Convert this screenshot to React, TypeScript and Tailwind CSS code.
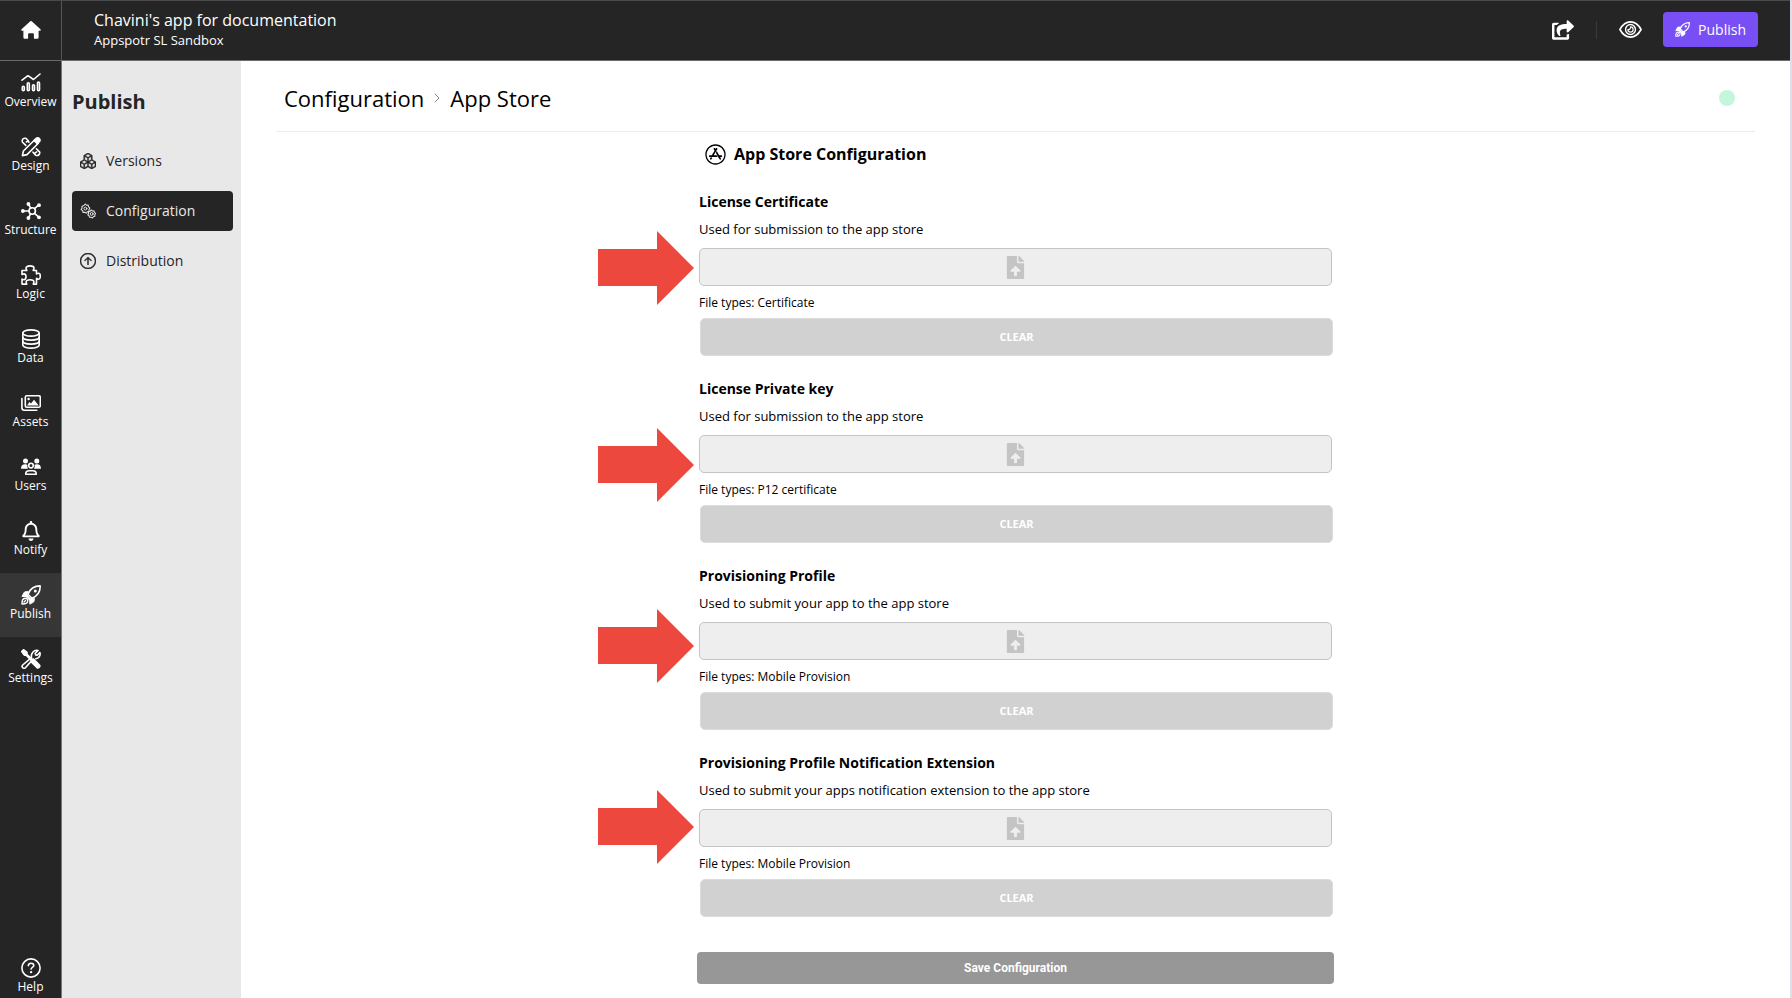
import type { ReactNode } from 'react'
import { FaAppStore, FaFileUpload, FaRegBell, FaShareSquare } from 'react-icons/fa'
import { BsBoxes, BsArrowUpCircle } from 'react-icons/bs'

function Icon({ children, className = 'size-5' }: { children: ReactNode; className?: string }) {
  return (
    <svg
      viewBox="0 0 20 20"
      className={className}
      fill="none"
      stroke="currentColor"
      strokeWidth="1.6"
      strokeLinecap="round"
      strokeLinejoin="round"
      aria-hidden="true"
    >
      {children}
    </svg>
  )
}

function HomeIcon() {
  return (
    <Icon>
      <path
        d="M9.3 1.3a1 1 0 0 1 1.4 0l8.8 8a.9.9 0 0 1-.6 1.5h-1.3v6.6a1.4 1.4 0 0 1-1.4 1.4h-2.4a.9.9 0 0 1-.9-.9v-3.6a1 1 0 0 0-1-1H8.1a1 1 0 0 0-1 1v3.6a.9.9 0 0 1-.9.9H3.8a1.400 1.400 0 0 1-1.400-1.400v-6.600H1.100a.9.9 0 0 1-.6-1.500z"
        fill="currentColor"
        stroke="none"
      />
    </Icon>
  )
}

function OverviewIcon() {
  return (
    <Icon>
      <path d="M1 7.200 7 2.700l5.500 3.800L19 1" />
      <rect x="1.300" y="13.300" width="2" height="4.400" rx="1" />
      <rect x="6.300" y="9.800" width="2" height="7.900" rx="1" />
      <rect x="11.500" y="11.800" width="2" height="5.900" rx="1" />
      <rect x="16.500" y="9.100" width="2" height="8.600" rx="1" />
    </Icon>
  )
}

function DesignIcon() {
  return (
    <Icon>
      <path d="m1.400 18.600 1-4.600L13.800 2.700l3.500 3.500L6 17.600z" />
      <path d="M13 3.500 15 1.500a2.300 2.300 0 0 1 3.300 0 2.300 2.300 0 0 1 0 3.300l-2 2z" fill="currentColor" />
      <path d="M8 5.200 6 2.400a2.600 2.600 0 0 0-4.400 2.800L4.800 8.400M7.200 3.600 5.400 5" />
      <path d="m12 15.200 2.600 2.900c2.200 1.300 4.600-.6 4.100-3l-3.300-3.300M13.500 16.300l2.200-1.400" />
    </Icon>
  )
}

function StructureIcon() {
  return (
    <Icon>
      <circle cx="11.200" cy="10" r="3.200" />
      <path d="M2.500 10H8M13.500 7.600l3.800-3.200M13.500 12.300l4 3.600M9.800 7.200 7.600 3.500M9.500 12.800l-1.700 3.600" />
      <g fill="currentColor" stroke="none">
        <circle cx="1.900" cy="10" r="1.900" />
        <circle cx="18" cy="4.200" r="1.900" />
        <circle cx="18" cy="16.300" r="1.900" />
        <circle cx="7.400" cy="3" r="1.900" />
        <circle cx="7.400" cy="17" r="1.900" />
      </g>
    </Icon>
  )
}

function LogicIcon() {
  return (
    <Icon>
      <path d="M1 5.500h4.800c0-.6-.8-1-.8-2.200C5 1.800 6.800.9 9 .9s4 .9 4 2.400c0 1.200-.8 1.600-.8 2.200h3.300V9c.6 0 1-.8 2.100-.8 1 0 1.700 1.400 1.700 3s-.7 3-1.700 3c-1.100 0-1.500-.8-2.100-.8v5.700h-3.300c0-.7.7-1 .7-2.100 0-1.400-1.700-2.300-3.900-2.300s-3.900.9-3.900 2.300c0 1.100.7 1.400.7 2.100H1v-5c.6 0 1 .6 1.900.6 1.300 0 2.100-1.300 2.100-2.900s-.8-2.900-2.100-2.900c-.9 0-1.300.6-1.900.6z" />
    </Icon>
  )
}

function DataIcon() {
  return (
    <Icon>
      <ellipse cx="10" cy="4" rx="8.200" ry="3.100" />
      <path d="M1.800 4v12c0 1.700 3.700 3.100 8.200 3.100s8.200-1.400 8.200-3.100V4" />
      <path d="M1.800 8.200c0 1.600 3.700 2.900 8.200 2.900s8.200-1.300 8.200-2.900M1.800 12.200c0 1.600 3.700 2.900 8.200 2.900s8.200-1.300 8.200-2.900" />
    </Icon>
  )
}

function AssetsIcon() {
  return (
    <Icon>
      <rect x="4.300" y="2.800" width="15" height="11.400" rx="1.500" />
      <path d="M.9 5.600v9.200a2.500 2.500 0 0 0 2.500 2.500h12.400" />
      <path d="M6 12.500 8.500 9l1.500 1.400L13 6.800l4.700 5.700z" fill="currentColor" stroke="none" />
      <circle cx="7.600" cy="6" r="1.200" fill="currentColor" stroke="none" />
    </Icon>
  )
}

function UsersIcon() {
  return (
    <Icon>
      <g fill="currentColor" stroke="none">
        <circle cx="4.500" cy="4" r="2.500" />
        <circle cx="15.800" cy="4" r="2.500" />
        <path d="M0 11.700C0 8.800 1.500 7.300 4 7.300c1.300 0 2 .3 2.500.8-.5 1.700-.1 2.700.6 3.600zM20 11.700c0-2.900-1.500-4.400-4-4.400-1.300 0-2 .3-2.500.8.5 1.700.1 2.700-.6 3.600z" />
      </g>
      <circle cx="10" cy="8.600" r="2.300" />
      <path d="M4.700 17.300c0-2.500 1.300-3.600 3.400-3.600h3.800c2.100 0 3.400 1.100 3.400 3.600z" />
    </Icon>
  )
}

function RocketIcon({ className }: { className?: string }) {
  return (
    <Icon className={className}>
      <path d="M7 9.200C9 4 12.800.9 19.100.9 19.500 7 16.300 11 10.900 13.300z" />
      <circle cx="14.300" cy="5.900" r="1.500" fill="currentColor" stroke="none" />
      <path d="M7.300 6.700H4.600c-.9 0-1.300.4-1.700 1.200L1 11.500h4.700zM13.200 12.900v2.700c0 .9-.4 1.300-1.200 1.700l-3.200 1.800v-4.700z" fill="currentColor" strokeWidth="1" />
      <path d="M5.500 9.700 10.300 14.500l-1.600.8-3.900-3.900z" fill="currentColor" strokeWidth="1" />
      <path d="M1 19c-.1-3.500.6-5.500 3-5.700 1.900 0 2.900 1.200 2.800 2.900C6.500 18.400 4.500 19.100 1 19zM3 17l1.600-1.500" strokeWidth="1.400" />
    </Icon>
  )
}

function SettingsIcon() {
  return (
    <Icon>
      <path d="M9.200 9.700 1.700 16a1.900 1.900 0 0 0 2.700 2.700l6.100-6.800M10.500 8.300c-.7-4 2.500-7.900 6.500-6.800l-2.800 2.800.4 1.600 1.600.3 2.700-2.700c1 3.300-1.300 6-4.100 6.200" />
      <path d="M.7 2.500 2.500.7 6 3.300v1.900l5 5 1.500-.1 5.900 5.900a1.800 1.800 0 0 1-2.500 2.500L10 12.600l.1-1.500-5-5H3.300z" fill="currentColor" strokeWidth="1.600" />
    </Icon>
  )
}

function HelpIcon() {
  return (
    <Icon>
      <circle cx="10" cy="10" r="9.100" />
      <path d="M7.300 7.600c.2-1.500 1.200-2.300 2.700-2.300 1.600 0 2.800.9 2.800 2.300 0 1.800-2.700 1.800-2.700 3.500" />
      <circle cx="10.100" cy="14.100" r="1.200" fill="currentColor" stroke="none" />
    </Icon>
  )
}

function EyeIcon() {
  return (
    <Icon className="size-[23px]">
      <path d="M.8 10C3 6 6.200 3.400 10 3.400S17 6 19.200 10C17 14 13.800 16.600 10 16.600S3 14 .8 10z" strokeWidth="1.400" />
      <circle cx="10" cy="10" r="4.300" strokeWidth="1.200" />
      <path d="M10 7.700a2.300 2.300 0 1 1-2.300 2.300c1.500.4 2.500-.8 2.300-2.300z" strokeWidth="1" />
    </Icon>
  )
}

function GearsIcon() {
  return (
    <Icon className="size-4">
      <path d="M6.500 1.200 8 2.800l2.200-.2.500 2.200 1.700 1.500-1.200 1.900.2 2.200-2.200.5L8 12.700l-1.900-1.100-2.300.1-.5-2.100-1.900-1.400 1.200-1.900L2.500 4l2.200-.6z" strokeWidth="1.300" />
      <circle cx="6.800" cy="7" r="1.800" strokeWidth="1.200" />
      <path d="m14.200 8.700 1.300 1.300 2-.2.500 1.900 1.500 1.300-1 1.700.1 2-1.900.5-1.200 1.500-1.700-1-2 .1-.5-1.900-1.600-1.200 1-1.700-.1-2 1.900-.5z" strokeWidth="1.300" />
      <circle cx="14.600" cy="13.700" r="1.800" strokeWidth="1.200" />
    </Icon>
  )
}

const navItems = [
  { label: 'Overview', icon: <OverviewIcon /> },
  { label: 'Design', icon: <DesignIcon /> },
  { label: 'Structure', icon: <StructureIcon /> },
  { label: 'Logic', icon: <LogicIcon /> },
  { label: 'Data', icon: <DataIcon /> },
  { label: 'Assets', icon: <AssetsIcon /> },
  { label: 'Users', icon: <UsersIcon /> },
  { label: 'Notify', icon: <FaRegBell className="size-5" /> },
  { label: 'Publish', icon: <RocketIcon />, active: true },
  { label: 'Settings', icon: <SettingsIcon /> },
]

const menuItems = [
  { label: 'Versions', icon: <BsBoxes className="size-4" stroke="currentColor" strokeWidth="0.5" /> },
  { label: 'Configuration', icon: <GearsIcon />, active: true },
  { label: 'Distribution', icon: <BsArrowUpCircle className="size-4" stroke="currentColor" strokeWidth="0.5" /> },
]

const sections = [
  { id: 'certificate', title: 'License Certificate', hint: 'Used for submission to the app store', types: 'Certificate' },
  { id: 'private-key', title: 'License Private key', hint: 'Used for submission to the app store', types: 'P12 certificate' },
  { id: 'profile', title: 'Provisioning Profile', hint: 'Used to submit your app to the app store', types: 'Mobile Provision' },
  {
    id: 'profile-extension',
    title: 'Provisioning Profile Notification Extension',
    hint: 'Used to submit your apps notification extension to the app store',
    types: 'Mobile Provision',
  },
]

// free-floating annotations, placed relative to the form
const arrows = ['top-[99px]', 'top-[296px]', 'top-[477px]', 'top-[658px]']

function NavItem({ label, icon, active }: { label: string; icon: ReactNode; active?: boolean }) {
  return (
    <a
      href="#"
      className={`flex h-16 flex-col items-center pt-3 text-xs leading-[18px] text-white ${active ? 'bg-[#363636]' : ''}`}
    >
      {icon}
      {label}
    </a>
  )
}

function UploadSection({ id, title, hint, types }: { id: string; title: string; hint: string; types: string }) {
  return (
    <section className="h-[187px]">
      <h3 className="text-sm leading-5 font-bold">{title}</h3>
      <p className="mt-2 text-[13px] leading-[18px]">{hint}</p>
      <label
        htmlFor={id}
        className="mt-2.5 flex h-[38px] items-center justify-center rounded-[5px] border border-[#c4c4c4] bg-[#eeeeee] text-[#c4c4c4]"
      >
        <FaFileUpload className="size-[23px]" />
        <input id={id} type="file" aria-label={title} className="sr-only" />
      </label>
      <p className="mt-2 text-xs leading-[18px]">File types: {types}</p>
      <button className="mt-1.5 ml-px h-[38px] w-full rounded-[5px] border border-[#dcdcdc] bg-[#d1d1d1] text-[11px] font-bold text-white">
        CLEAR
      </button>
    </section>
  )
}

export default function App() {
  return (
    <div className="flex min-h-screen flex-col border-r-2 border-[#dcdfe8] bg-white font-['Open_Sans',sans-serif] text-black">
      <header className="flex h-[61px] border-t border-b border-t-[#4a4a4a] border-b-[#6b6b6b] bg-[#252525] text-white">
        <a href="#" aria-label="Home" className="flex w-[62px] items-center justify-center border-r border-[#555555] pb-0.5">
          <HomeIcon />
        </a>
        <div className="flex flex-1 items-center justify-between pr-8 pb-0.5 pl-8">
          <div>
            <h1 className="text-base leading-5">Chavini's app for documentation</h1>
            <p className="text-[13px] leading-5">Appspotr SL Sandbox</p>
          </div>
          <div className="flex items-center">
            <button aria-label="Share">
              <FaShareSquare className="size-[22px]" />
            </button>
            <span className="ml-[22px] h-[18px] w-px bg-[#3a3a3a]" />
            <button aria-label="Preview" className="ml-[22px]">
              <EyeIcon />
            </button>
            <button className="ml-[21px] flex h-[35px] items-center gap-2 rounded-[4px] bg-[#784ef5] px-3 text-sm">
              <RocketIcon className="size-[15px]" />
              Publish
            </button>
          </div>
        </div>
      </header>

      <div className="flex flex-1">
        <nav className="flex w-[62px] flex-col border-r border-[#777777] bg-[#252525]">
          {navItems.map((item) => (
            <NavItem key={item.label} {...item} />
          ))}
          <div className="mt-auto -mb-3">
            <NavItem label="Help" icon={<HelpIcon />} />
          </div>
        </nav>

        <aside className="w-[179px] bg-[#e8e8e8] px-2.5 pt-[27px]">
          <h2 className="text-xl leading-7 font-bold text-[#252525]">Publish</h2>
          <ul className="mt-[25px] flex flex-col gap-2.5">
            {menuItems.map((item) => (
              <li key={item.label}>
                <a
                  href="#"
                  className={`flex h-10 w-[161px] items-center gap-2.5 rounded-[4px] px-2 text-sm ${item.active ? 'bg-[#252525] text-[#e8e8e8]' : 'text-[#252525]'}`}
                >
                  {item.icon}
                  {item.label}
                </a>
              </li>
            ))}
          </ul>
        </aside>

        <main className="flex-1">
          <div className="mx-[35px] flex h-[71px] items-center justify-between border-b border-[#ececec] pt-1 pr-5 pl-2">
            <div className="flex items-center text-[22px] leading-7">
              <a href="#">Configuration</a>
              <svg viewBox="0 0 6 10" className="mx-2.5 h-2.5 w-1.5" fill="none" stroke="#888888" aria-hidden="true">
                <path d="m.7.7 4.300 4.300L.7 9.300" />
              </svg>
              <span>App Store</span>
            </div>
            <span className="size-4 rounded-full bg-[#c4f5dd]" />
          </div>

          <form className="relative mx-auto w-[637px] pb-3" onSubmit={(e) => e.preventDefault()}>
            {arrows.map((top) => (
              <svg key={top} viewBox="0 0 96 74" className={`absolute -left-[99px] h-[74px] w-24 ${top}`} fill="#ec483e" aria-hidden="true">
                <path d="M0 18h59V0l37 37-37 37V55H0z" />
              </svg>
            ))}
            <h2 className="flex items-center gap-2 px-2 pt-2.5 text-base leading-6 font-bold">
              <FaAppStore className="size-[21px]" />
              App Store Configuration
            </h2>
            <div className="px-0.5 pt-[26px]">
              {sections.map((section) => (
                <UploadSection key={section.id} {...section} />
              ))}
            </div>
            <button className="mt-3 h-8 w-full rounded-[4px] bg-[#979797] font-['Roboto',sans-serif] text-xs font-bold text-white">
              Save Configuration
            </button>
          </form>
        </main>
      </div>
    </div>
  )
}
